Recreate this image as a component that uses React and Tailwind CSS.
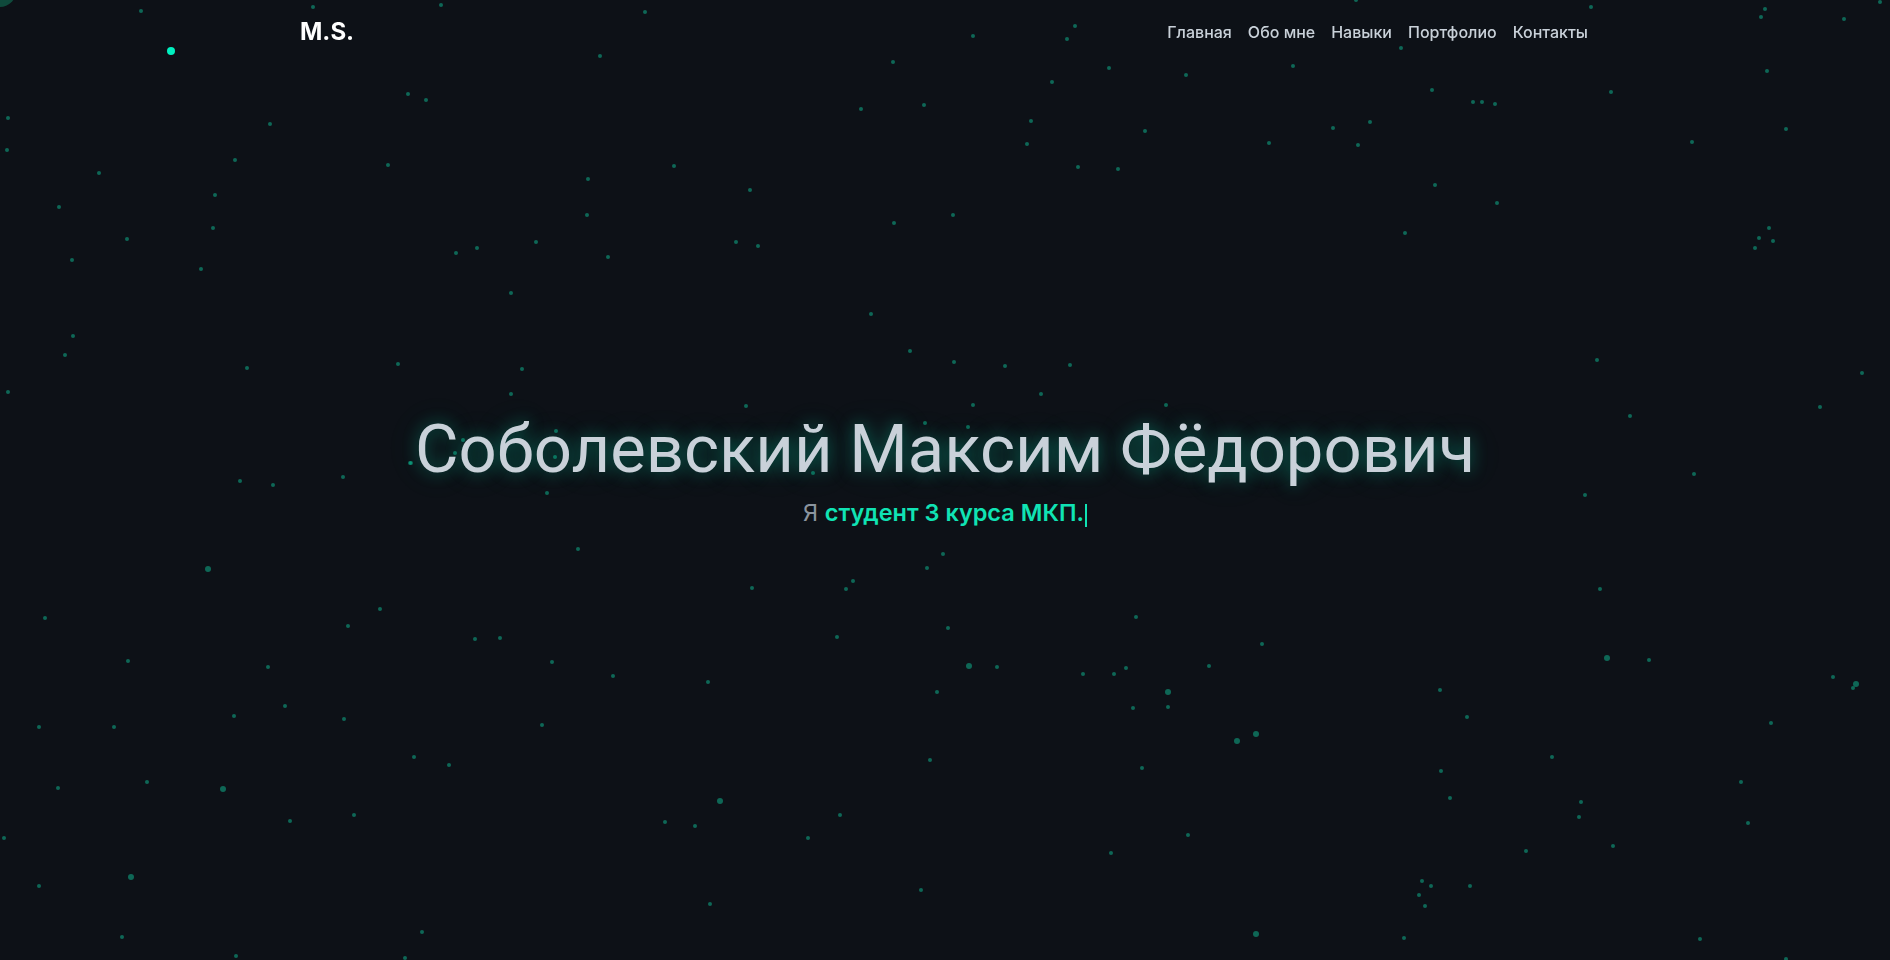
import React from "react";

const dots = [
  [141,11,3],[313,7,3],[441,5,2],[645,12,2],[600,56,2],[408,94,2],[426,100,3],[8,118,2],[7,150,3],[270,124,2],[235,160,2],[388,165,2],[674,166,2],[99,173,3],[588,179,3],[59,207,3],[215,195,3],[587,215,3],[213,228,3],[127,239,3],[536,242,2],[477,248,2],[456,253,3],[608,257,2],[72,260,2],[201,269,3],[511,293,2],[73,336,3],[65,355,3],[398,364,3],[247,368,3],[522,369,3],[8,392,2],[511,394,3],[410,463,3],[343,477,3],
  [973,36,2],[1075,26,2],[1067,39,3],[893,62,3],[1109,68,2],[1052,82,2],[1186,75,3],[1293,66,2],[861,109,2],[924,105,2],[1031,121,2],[1027,144,3],[1145,131,2],[1269,143,2],[1078,167,2],[1118,169,2],[750,190,2],[953,215,3],[894,223,2],[736,242,3],[758,246,3],[871,314,2],[910,351,3],[954,362,3],[1005,366,3],[1070,365,3],[1041,394,3],
  [1591,7,2],[1765,9,3],[1761,17,2],[1844,19,2],[1880,2,2],[1356,0,2],[1401,48,2],[1767,71,2],[1432,90,3],[1473,102,2],[1482,102,3],[1495,104,2],[1611,92,3],[1333,128,3],[1370,122,2],[1358,145,3],[1786,129,3],[1692,142,2],[1435,185,2],[1497,203,3],[1405,233,3],[1769,228,2],[1759,238,3],[1773,241,2],[1755,248,3],[1597,360,3],[1862,373,3],[1820,407,2],[1630,416,2],[1694,474,3],
  [746,406,2],[973,405,2],[925,423,3],[968,427,2],[411,463,3],[455,453,3],[463,440,2],[556,431,2],[555,457,2],[813,473,2],[1166,405,2],
  [240,481,2],[273,485,3],[547,493,2],[578,549,3],[208,569,4],[45,618,3],[380,609,3],[348,626,2],[475,639,3],[500,638,2],[552,662,2],[128,661,3],[268,667,2],[613,676,3],[285,706,3],[234,716,2],[344,719,3],[542,725,3],[39,727,2],[114,727,2],[414,757,2],[449,765,2],[147,782,2],[58,788,2],[223,789,4],[354,815,3],[290,821,2],[665,822,2],[695,826,2],[4,838,3],[131,877,4],[39,886,3],[422,932,3],[122,937,2],[236,956,3],[405,958,2],
  [943,554,2],[927,568,3],[853,581,3],[846,589,3],[752,588,3],[1136,617,3],[948,628,2],[837,637,2],[1262,644,3],[969,666,4],[997,667,2],[1083,674,3],[1114,674,2],[1126,668,2],[1209,666,3],[708,682,2],[937,692,2],[1168,692,4],[1133,708,3],[1168,707,2],[1256,734,4],[1237,741,4],[930,760,2],[1142,768,3],[720,801,4],[840,815,2],[808,838,3],[1188,835,3],[1111,853,3],[921,890,3],[710,904,3],[1256,934,4],
  [1585,495,2],[1600,589,2],[1607,658,4],[1649,660,3],[1833,677,2],[1856,684,4],[1853,688,2],[1440,690,3],[1467,717,2],[1771,723,2],[1552,757,3],[1441,771,2],[1741,782,3],[1450,798,3],[1581,802,3],[1579,817,3],[1748,823,3],[1613,846,2],[1526,851,3],[1422,881,2],[1431,886,2],[1470,886,2],[1419,895,3],[1425,906,2],[1404,938,3],[1700,939,3],[1786,959,3],
];

const navItems = ["Главная", "Обо мне", "Навыки", "Портфолио", "Контакты"];

export default function App() {
  return (
    <div className="relative min-h-screen w-full overflow-hidden bg-[#0d1117]">
      {/* particles */}
      <div className="pointer-events-none absolute inset-0">
        {dots.map(([x, y, s], i) => {
          const d = s + 1.5;
          return (
            <span
              key={i}
              className="absolute rounded-full bg-[rgba(16,190,150,0.5)]"
              style={{ left: x - d / 2, top: y - d / 2, width: d, height: d }}
            />
          );
        })}
      </div>

      {/* cursor follower ring and dot */}
      <div className="pointer-events-none absolute left-[-16px] top-[-25px] h-8 w-8 rounded-full bg-[#0f4a3c]" />
      <div className="pointer-events-none absolute left-[167px] top-[47px] h-2 w-2 rounded-full bg-[#00f0c0]" />

      {/* header */}
      <header className="fixed left-0 right-0 top-0 z-10">
        <div className="mx-auto flex h-16 max-w-[1290px] items-center justify-between">
          <a className="font-['Inter',sans-serif] text-2xl font-bold leading-none text-white">M.S.</a>
          <nav className="flex items-center gap-4 pr-[2px]">
            {navItems.map((n) => (
              <a key={n} className="font-['Inter',sans-serif] text-base font-medium text-[#c9d1d9]">
                {n}
              </a>
            ))}
          </nav>
        </div>
      </header>

      {/* hero */}
      <main className="relative flex h-screen flex-col items-center justify-center pb-[17px]">
        <h1 className="font-['Roboto',sans-serif] text-[67px] font-normal leading-none text-[#c9d1d9] [text-shadow:0_0_16px_rgba(0,230,180,0.35),0_0_36px_rgba(0,230,180,0.15)]">
          Соболевский Максим Фёдорович
        </h1>
        <p className="mt-4 flex items-center font-['Inter',sans-serif] text-[23.5px] leading-7">
          <span className="text-[#8b949e]">Я&nbsp;</span>
          <span className="font-semibold text-[#10e3b4]">студент 3 курса МКП.</span>
          <span className="relative top-[2px] ml-[1px] inline-block h-[23px] w-[2px] bg-[#10e3b4]" />
        </p>
      </main>
    </div>
  );
}
